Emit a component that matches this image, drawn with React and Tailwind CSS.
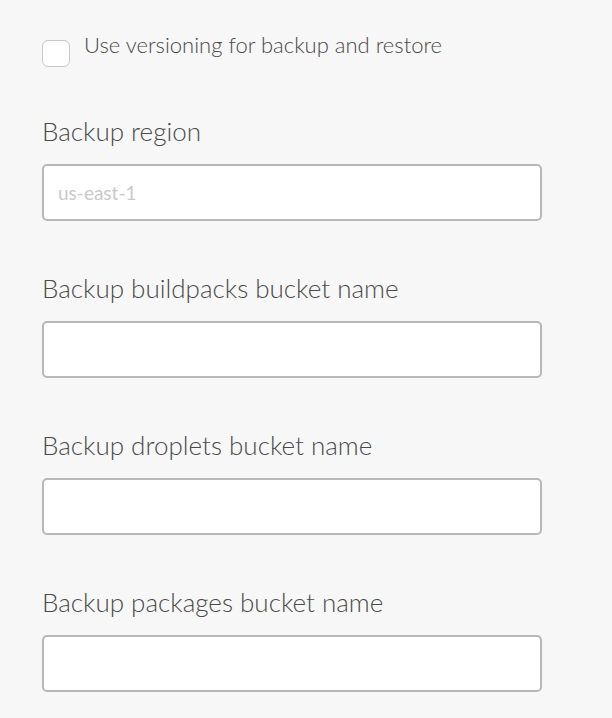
import React, { useState } from "react";

const fields = [
  { id: "region", label: "Backup region", placeholder: "us-east-1" },
  { id: "buildpacks", label: "Backup buildpacks bucket name", placeholder: "" },
  { id: "droplets", label: "Backup droplets bucket name", placeholder: "" },
  { id: "packages", label: "Backup packages bucket name", placeholder: "" },
];

const Field = ({ label, placeholder, value, onChange }) => (
  <div className="flex flex-col">
    <label className="text-[26px] leading-[30px] font-light text-[#4a4a4a] mb-[18px]">{label}</label>
    <input
      type="text"
      value={value}
      onChange={onChange}
      placeholder={placeholder}
      className="w-[500px] h-[57px] rounded-[5px] border-2 border-[#b8b8b8] bg-white px-[14px] text-[19px] text-[#555] placeholder:text-[#c9c9c9] outline-none"
    />
  </div>
);

export default function App() {
  const [versioning, setVersioning] = useState(false);
  const [values, setValues] = useState({});

  return (
    <div className="min-h-screen bg-[#f7f7f7] pl-[42px] pt-[31px]" style={{ fontFamily: "Lato, 'Noto Sans', sans-serif" }}>
      <label className="flex items-start gap-[14px] cursor-pointer">
        <input
          type="checkbox"
          checked={versioning}
          onChange={(e) => setVersioning(e.target.checked)}
          className="appearance-none mt-[9px] w-[28px] h-[27px] rounded-[6px] border border-[#c8c8c8] bg-white shrink-0"
        />
        <span className="text-[22px] leading-[28px] font-light text-[#4a4a4a]">Use versioning for backup and restore</span>
      </label>

      <div className="flex flex-col gap-[52px] mt-[49px]">
        {fields.map((f) => (
          <Field
            key={f.id}
            label={f.label}
            placeholder={f.placeholder}
            value={values[f.id] || ""}
            onChange={(e) => setValues((v) => ({ ...v, [f.id]: e.target.value }))}
          />
        ))}
      </div>
    </div>
  );
}
